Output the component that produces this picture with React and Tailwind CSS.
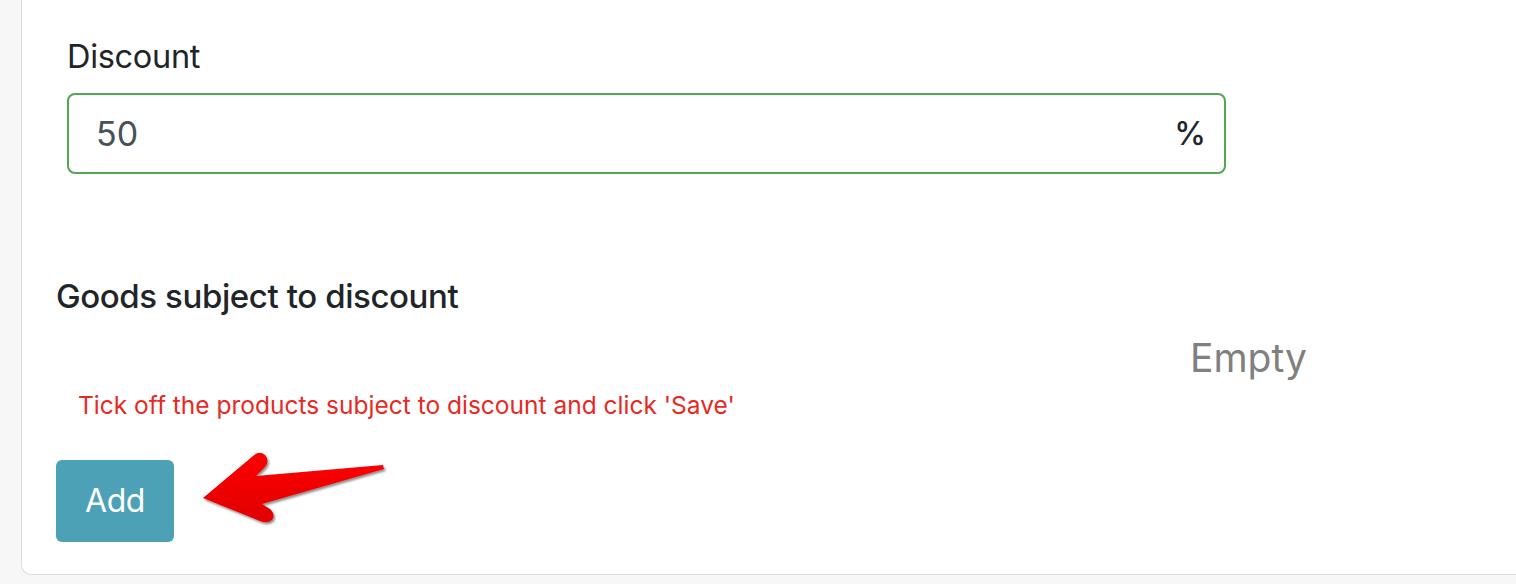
import React from "react";

export default function App() {
  const font = { fontFamily: "Inter, 'Liberation Sans', sans-serif" };
  return (
    <div className="relative w-[1516px] h-[584px] bg-[#f7f7f7] pl-[21px] overflow-hidden" style={font}>
      <div className="h-[575px] bg-white border-l border-b border-[#dcdcdc] rounded-bl-[10px] pl-[34px] flex flex-col">
        <div className="pl-[11px] pt-[37px]">
          <div className="text-[32.5px] leading-[40px] text-[#212529] tracking-[-0.3px]">Discount</div>
          <div className="mt-[16px] w-[1159px] h-[81px] border-2 border-[#53a653] rounded-[8px] flex items-center justify-between pl-[27px] pr-[18px]">
            <span className="text-[34px] text-[#495057]">50</span>
            <span className="text-[32px] font-medium text-[#212529]">%</span>
          </div>
        </div>
        <div className="mt-[102px] text-[33px] leading-[40px] font-medium text-[#212529] tracking-[-0.4px]">Goods subject to discount</div>
        <div className="mt-[18px] h-[48px] pl-[1134px] text-[39px] leading-[48px] text-[#808080]">Empty</div>
        <div className="mt-[6px] pl-[22px] text-[24.5px] leading-[34px] text-[#e8291f]">Tick off the products subject to discount and click 'Save'</div>
        <div className="mt-[38px] flex items-center">
          <button className="w-[118px] h-[82px] rounded-[6px] bg-[#4da1b6] text-white text-[32px] flex items-center justify-center tracking-[-0.5px]">Add</button>
        </div>
      </div>
      <svg className="absolute left-0 top-0 pointer-events-none" width="1516" height="584">
        <defs>
          <linearGradient id="ag2" x1="0" y1="0" x2="0" y2="1">
            <stop offset="0" stopColor="#ff0505" />
            <stop offset="1" stopColor="#e00000" />
          </linearGradient>
          <filter id="sh2" x="-20%" y="-40%" width="140%" height="180%">
            <feDropShadow dx="1.5" dy="2" stdDeviation="1" floodColor="#000" floodOpacity="0.45" />
          </filter>
        </defs>
        <path
          d="M203,498 L253,456 Q259,450 265,455 Q270,461 265,467 L256,476 L383,465 L384,469 L262,504 L270,509 Q276,515 272,520 Q267,524 260,521 Z"
          fill="url(#ag2)"
          filter="url(#sh2)"
        />
      </svg>
    </div>
  );
}
